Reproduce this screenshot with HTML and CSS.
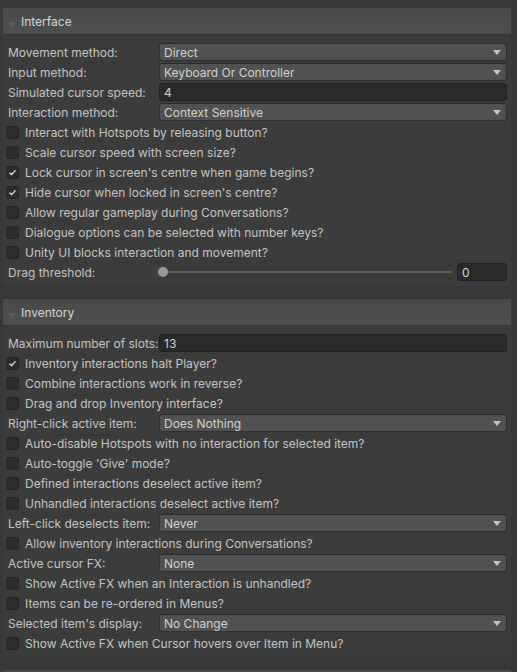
FILE: index.html
```html
<!DOCTYPE html>
<html>
<head>
<meta charset="utf-8">
<link rel="stylesheet" href="styles.css">
</head>
<body>
<div class="inspector">
  <section class="panel">
    <div class="header"><span class="fold"></span><span class="title">Interface</span></div>
    <div class="body">
      <div class="row"><span class="label">Movement method:</span><div class="popup">Direct<span class="arrow"></span></div></div>
      <div class="row"><span class="label">Input method:</span><div class="popup">Keyboard Or Controller<span class="arrow"></span></div></div>
      <div class="row"><span class="label">Simulated cursor speed:</span><div class="field">4</div></div>
      <div class="row"><span class="label">Interaction method:</span><div class="popup">Context Sensitive<span class="arrow"></span></div></div>
      <div class="row check"><span class="box"></span><span>Interact with Hotspots by releasing button?</span></div>
      <div class="row check"><span class="box"></span><span>Scale cursor speed with screen size?</span></div>
      <div class="row check"><span class="box on"><svg viewBox="0 0 13 13"><path d="M3 6.8 L5.4 9 L10 4" /></svg></span><span>Lock cursor in screen's centre when game begins?</span></div>
      <div class="row check"><span class="box on"><svg viewBox="0 0 13 13"><path d="M3 6.8 L5.4 9 L10 4" /></svg></span><span>Hide cursor when locked in screen's centre?</span></div>
      <div class="row check"><span class="box"></span><span>Allow regular gameplay during Conversations?</span></div>
      <div class="row check"><span class="box"></span><span>Dialogue options can be selected with number keys?</span></div>
      <div class="row check"><span class="box"></span><span>Unity UI blocks interaction and movement?</span></div>
      <div class="row"><span class="label">Drag threshold:</span>
        <div class="slider"><div class="track"><span class="thumb"></span></div><div class="field small">0</div></div>
      </div>
    </div>
  </section>

  <section class="panel">
    <div class="header"><span class="fold"></span><span class="title">Inventory</span></div>
    <div class="body">
      <div class="row"><span class="label">Maximum number of slots:</span><div class="field">13</div></div>
      <div class="row check"><span class="box on"><svg viewBox="0 0 13 13"><path d="M3 6.8 L5.4 9 L10 4" /></svg></span><span>Inventory interactions halt Player?</span></div>
      <div class="row check"><span class="box"></span><span>Combine interactions work in reverse?</span></div>
      <div class="row check"><span class="box"></span><span>Drag and drop Inventory interface?</span></div>
      <div class="row"><span class="label">Right-click active item:</span><div class="popup">Does Nothing<span class="arrow"></span></div></div>
      <div class="row check"><span class="box"></span><span>Auto-disable Hotspots with no interaction for selected item?</span></div>
      <div class="row check"><span class="box"></span><span>Auto-toggle 'Give' mode?</span></div>
      <div class="row check"><span class="box"></span><span>Defined interactions deselect active item?</span></div>
      <div class="row check"><span class="box"></span><span>Unhandled interactions deselect active item?</span></div>
      <div class="row"><span class="label">Left-click deselects item:</span><div class="popup">Never<span class="arrow"></span></div></div>
      <div class="row check"><span class="box"></span><span>Allow inventory interactions during Conversations?</span></div>
      <div class="row"><span class="label">Active cursor FX:</span><div class="popup">None<span class="arrow"></span></div></div>
      <div class="row check"><span class="box"></span><span>Show Active FX when an Interaction is unhandled?</span></div>
      <div class="row check"><span class="box"></span><span>Items can be re-ordered in Menus?</span></div>
      <div class="row"><span class="label">Selected item's display:</span><div class="popup">No Change<span class="arrow"></span></div></div>
      <div class="row check"><span class="box"></span><span>Show Active FX when Cursor hovers over Item in Menu?</span></div>
    </div>
  </section>

  <section class="panel">
    <div class="header"><span class="fold"></span><span class="title"></span></div>
  </section>
</div>
</body>
</html>
```

FILE: styles.css
```css
html, body {
  margin: 0;
  padding: 0;
  background: #383838;
  height: 100%;
  overflow: hidden;
}
body {
  font-family: Inter, "Noto Sans", sans-serif;
  font-size: 12px;
  color: #c4c4c4;
}
.inspector {
  padding: 8px 6px 0 3px;
  display: flex;
  flex-direction: column;
  gap: 14px;
}
.panel {
  background: #3c3c3c;
}
.header {
  height: 27px;
  background: linear-gradient(#4a4a4a, #4e4e4e);
  display: flex;
  align-items: center;
  position: relative;
  border-bottom: 1px solid #333;
  box-sizing: border-box;
}
.fold {
  width: 0;
  height: 0;
  border-left: 4px solid transparent;
  border-right: 4px solid transparent;
  border-top: 6px solid #5c5c5c;
  margin: 8px 5px 0 5px;
}
.title {
  color: #d6d6d6;
  font-size: 12px;
}
.body {
  padding: 7px 4px 3px 5px;
  display: flex;
  flex-direction: column;
}
.row {
  height: 20px;
  display: flex;
  align-items: center;
}
.label {
  width: 151px;
  flex: none;
  white-space: nowrap;
}
.popup, .field {
  flex: 1;
  height: 18px;
  box-sizing: border-box;
  border-radius: 3px;
  display: flex;
  align-items: center;
  padding-left: 4px;
  position: relative;
  color: #d2d2d2;
}
.popup {
  background: #515151;
  border: 1px solid #303030;
  border-top-color: #2a2a2a;
}
.popup .arrow {
  position: absolute;
  right: 5px;
  top: 6px;
  width: 0;
  height: 0;
  border-left: 4px solid transparent;
  border-right: 4px solid transparent;
  border-top: 5px solid #c4c4c4;
}
.field {
  background: #2a2a2a;
  border: 1px solid #212121;
}
.check .box {
  width: 13px;
  height: 13px;
  box-sizing: border-box;
  background: #2c2c2c;
  border: 1px solid #262626;
  border-radius: 2px;
  margin: 0 6px 0 -2px;
  flex: none;
  display: flex;
}
.box svg {
  width: 100%;
  height: 100%;
  fill: none;
  stroke: #e6e6e6;
  stroke-width: 1.6;
}
.check span:last-child {
  white-space: nowrap;
}
.slider {
  flex: 1;
  display: flex;
  align-items: center;
  gap: 5px;
}
.track {
  flex: 1;
  height: 2px;
  background: #5e5e5e;
  position: relative;
  margin-left: 4px;
}
.thumb {
  position: absolute;
  left: -5px;
  top: -4px;
  width: 10px;
  height: 10px;
  border-radius: 50%;
  background: #999999;
}
.field.small {
  flex: none;
  width: 50px;
}
```
